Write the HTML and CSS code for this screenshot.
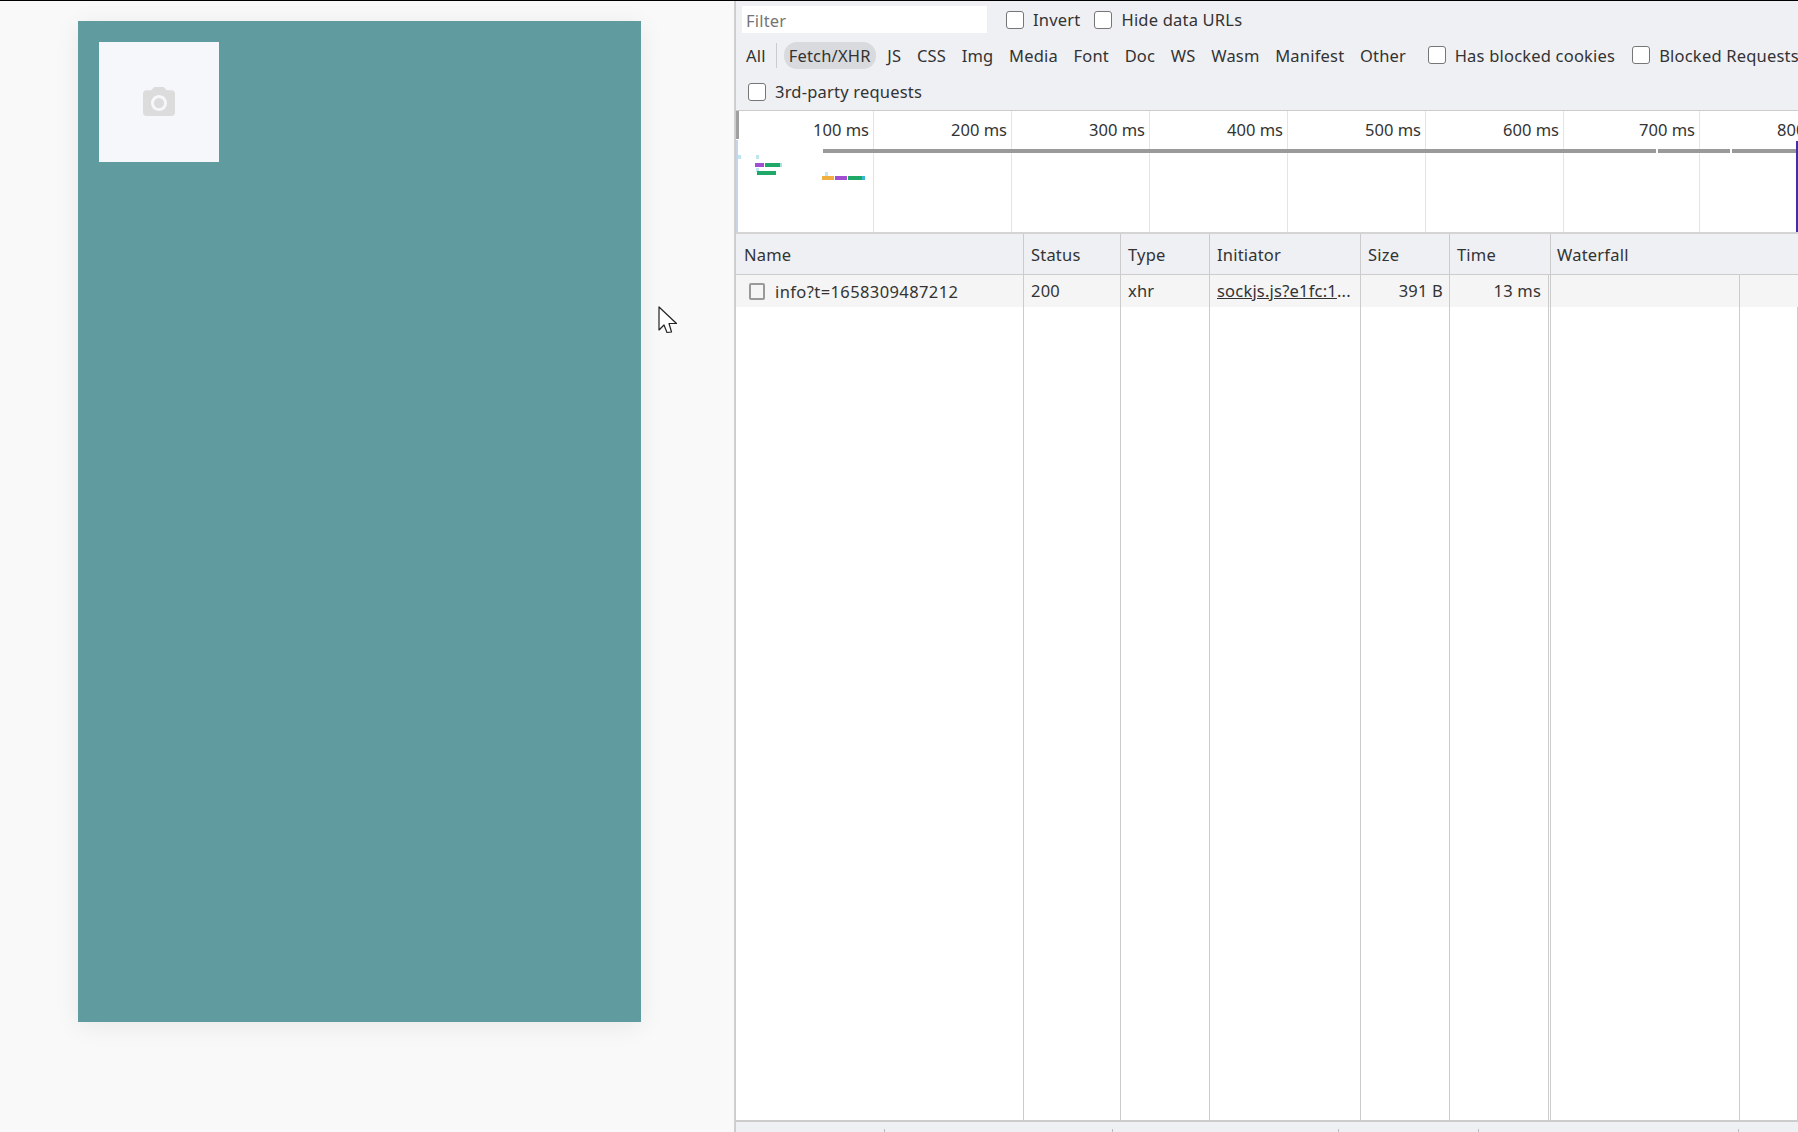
FILE: index.html
```html
<!DOCTYPE html>
<html lang="en">
<head>
    <meta charset="UTF-8">
    <meta name="viewport" content="width=device-width, initial-scale=1.0">
    <title>Network</title>
    <link rel="stylesheet" href="styles.css">
</head>
<body>
    <div class="main">
        <div class="page">
            <div class="phone">
                <div class="thumb">
                    <svg class="camera" viewBox="2 2 20 18" width="32" height="29"><path fill-rule="evenodd" d="M9 2L7.17 4H4c-1.1 0-2 .9-2 2v12c0 1.1.9 2 2 2h16c1.1 0 2-.9 2-2V6c0-1.1-.9-2-2-2h-3.17L15 2H9zm3 15c-2.76 0-5-2.24-5-5s2.24-5 5-5 5 2.24 5 5-2.24 5-5 5z"/><circle cx="12" cy="12" r="3.2"/></svg>
                </div>
            </div>
            <svg class="cursor" viewBox="0 0 20 29" width="20" height="29"><path d="M1 1v23l5-5 3 7.500 4.500-.5-2.500-8.500h7.500z" fill="#fff" stroke="#222" stroke-width="1.2" stroke-linejoin="round"/></svg>
        </div>
        <div class="devtools">
            <div class="toolbar">
                <div class="bar-row row-filter">
                    <div class="filter-input">Filter</div>
                    <label class="check check-invert"><input type="checkbox">Invert</label>
                    <label class="check check-hide"><input type="checkbox">Hide data URLs</label>
                </div>
                <div class="bar-row row-types">
                    <span class="type type-all">All</span>
                    <span class="type-sep"></span>
                    <span class="type type-active">Fetch/XHR</span>
                    <span class="type">JS</span>
                    <span class="type">CSS</span>
                    <span class="type">Img</span>
                    <span class="type">Media</span>
                    <span class="type">Font</span>
                    <span class="type">Doc</span>
                    <span class="type">WS</span>
                    <span class="type">Wasm</span>
                    <span class="type">Manifest</span>
                    <span class="type">Other</span>
                    <label class="check check-cookies"><input type="checkbox">Has blocked cookies</label>
                    <label class="check check-blocked"><input type="checkbox">Blocked Requests</label>
                </div>
                <div class="bar-row row-third">
                    <label class="check"><input type="checkbox">3rd-party requests</label>
                </div>
            </div>
            <div class="overview">
                <div class="tick">100 ms</div>
                <div class="tick">200 ms</div>
                <div class="tick">300 ms</div>
                <div class="tick">400 ms</div>
                <div class="tick">500 ms</div>
                <div class="tick">600 ms</div>
                <div class="tick tick-short">700 ms</div>
                <div class="tick">800 ms</div>
                <span class="ov thumb-grab"></span>
                <span class="ov start-line"></span>
                <span class="ov load-line"></span>
                <span class="ov track track-a"></span>
                <span class="ov track track-b"></span>
                <span class="ov track track-c"></span>
                <span class="ov mark mark-a"></span>
                <span class="ov mark mark-b"></span>
                <span class="ov mark mark-c"></span>
                <span class="ov mark mark-d"></span>
                <span class="ov seg seg-p1"></span>
                <span class="ov seg seg-g1"></span>
                <span class="ov seg seg-c1"></span>
                <span class="ov seg seg-g2"></span>
                <span class="ov seg seg-o3"></span>
                <span class="ov seg seg-p3"></span>
                <span class="ov seg seg-g3"></span>
                <span class="ov seg seg-c3"></span>
            </div>
            <div class="net-table">
                <div class="head head-name">Name</div>
                <div class="head">Status</div>
                <div class="head">Type</div>
                <div class="head">Initiator</div>
                <div class="head">Size</div>
                <div class="head">Time</div>
                <div class="head head-fall">Waterfall</div>

                <div class="cell cell-name"><span class="row-box"></span>info?t=1658309487212</div>
                <div class="cell">200</div>
                <div class="cell">xhr</div>
                <div class="cell"><span class="link">sockjs.js?e1fc:1</span>...</div>
                <div class="cell cell-num cell-size">391 B</div>
                <div class="cell cell-num cell-time">13 ms</div>
                <div class="cell"></div>
                <div class="cell cell-last"></div>

                <div class="fill"></div>
                <div class="fill"></div>
                <div class="fill"></div>
                <div class="fill"></div>
                <div class="fill"></div>
                <div class="fill fill-time"></div>
                <div class="fill"></div>
                <div class="fill cell-last"></div>
            </div>
            <div class="foot">
                <span></span><span></span><span></span><span></span><span></span>
            </div>
        </div>
    </div>
</body>
</html>
```

FILE: styles.css
```css
* {
    box-sizing: border-box;
}
html, body {
    height: 100%;
}
body {
    margin: 0;
    overflow: hidden;
    border-top: 1px solid #000;
    font-family: "Noto Sans", Arial, sans-serif;
    font-size: 16.5px;
    letter-spacing: 0.2px;
    color: #333;
    background-color: #fff;
}
.main {
    display: flex;
    height: 1131px;
}

/* left: page preview */
.page {
    position: relative;
    width: 735px;
    flex: none;
    padding: 20px 0 0 78px;
    background-color: #f9f9f9;
    border-right: 1px solid #d0d0d0;
}
.phone {
    width: 563px;
    height: 1001px;
    padding: 21px;
    background-color: #5f9b9f;
    box-shadow: 0 4px 24px rgba(0, 0, 0, 0.07);
}
.thumb {
    display: flex;
    justify-content: center;
    align-items: center;
    width: 120px;
    height: 120px;
    padding-bottom: 1px;
    background-color: #f5f7fb;
}
.camera {
    fill: #dcdcdc;
}
.cursor {
    position: absolute;
    left: 658px;
    top: 305px;
}

/* right: network panel */
.devtools {
    display: flex;
    flex-direction: column;
    flex: 1;
    min-width: 0;
    overflow: hidden;
    border-left: 1px solid #ccc;
}
.toolbar {
    height: 110px;
    flex: none;
    background-color: #eff0f4;
    border-bottom: 1px solid #ccc;
}
.bar-row {
    display: flex;
    align-items: center;
    white-space: nowrap;
}
.bar-row > * {
    flex: none;
}
.row-filter {
    height: 37px;
    padding-left: 6px;
}
.row-types {
    height: 34px;
    padding-left: 6px;
}
.row-third {
    height: 38px;
    padding-top: 1px;
    padding-left: 12px;
}
.filter-input {
    width: 245px;
    height: 27px;
    padding-left: 4px;
    line-height: 29px;
    color: #757575;
    background-color: #fff;
}
.check {
    display: flex;
    align-items: center;
}
.check input {
    appearance: none;
    flex: none;
    width: 18px;
    height: 18px;
    margin: 0 9px 0 0;
    background-color: #fff;
    border: 1.5px solid #767676;
    border-radius: 3px;
}
.check-invert {
    margin-left: 19px;
}
.check-hide {
    margin-left: 14px;
}
.check-cookies {
    margin-left: 10px;
}
.check-blocked {
    margin-left: 17px;
}
.type {
    padding: 2px 4px;
    margin-right: 7.6px;
    border-radius: 13px;
}
.type-all {
    margin-right: 6px;
}
.type-sep {
    width: 1px;
    height: 25px;
    margin-right: 7px;
    background-color: #ccc;
}
.type-active {
    padding: 2px 5px;
    background-color: #d9dadd;
}

/* timeline overview */
.overview {
    position: relative;
    display: flex;
    height: 121px;
    flex: none;
    letter-spacing: 0;
    background-color: #fff;
}
.tick {
    width: 138px;
    flex: none;
    padding: 7px 4px 0 0;
    text-align: right;
    border-right: 1px solid #e4e4e4;
}
.tick-short {
    width: 136px;
}
.ov {
    position: absolute;
}
.thumb-grab {
    left: 0;
    top: 0;
    width: 3px;
    height: 28px;
    background-color: #a0a0a0;
}
.start-line {
    left: 0;
    top: 29px;
    width: 2px;
    height: 92px;
    background-color: #c9d3e8;
}
.load-line {
    right: 0;
    top: 30px;
    width: 2px;
    height: 91px;
    background-color: #3f2fb0;
}
.track {
    top: 38px;
    height: 4px;
    background-color: #9a9a9a;
}
.track-a {
    left: 87px;
    width: 833px;
}
.track-b {
    left: 922px;
    width: 72px;
}
.track-c {
    left: 996px;
    right: 2px;
}
.mark {
    width: 3px;
    height: 4px;
    background-color: #bfe6f0;
}
.mark-a {
    left: 2px;
    top: 44px;
}
.mark-b {
    left: 20px;
    top: 44px;
}
.mark-c {
    left: 20px;
    top: 57px;
}
.mark-d {
    left: 89px;
    top: 61px;
}
.seg {
    height: 4px;
}
.seg-p1 {
    left: 19px;
    top: 52px;
    width: 9px;
    background-color: #a04fd0;
}
.seg-g1 {
    left: 29px;
    top: 52px;
    width: 15px;
    background-color: #1fa868;
}
.seg-c1 {
    left: 44px;
    top: 52px;
    width: 2px;
    background-color: #a8e0e8;
}
.seg-g2 {
    left: 21px;
    top: 60px;
    width: 19px;
    background-color: #1fa868;
}
.seg-o3 {
    left: 86px;
    top: 65px;
    width: 12px;
    background-color: #f0b040;
}
.seg-p3 {
    left: 99px;
    top: 65px;
    width: 12px;
    background-color: #a04fd0;
}
.seg-g3 {
    left: 112px;
    top: 65px;
    width: 14px;
    background-color: #1fa868;
}
.seg-c3 {
    left: 126px;
    top: 65px;
    width: 3px;
    background-color: #35b8d0;
}

/* request table */
.net-table {
    display: grid;
    flex: 1;
    min-height: 0;
    grid-template-columns: 288px 97px 89px 151px 89px 101px 189px 1fr;
    grid-template-rows: 41px 32px 1fr;
    border-top: 2px solid #d4d4d4;
}
.head {
    padding-left: 7px;
    line-height: 41px;
    background-color: #eff0f4;
    border-right: 1px solid #ccc;
    border-bottom: 1px solid #ccc;
}
.head-name {
    padding-left: 8px;
}
.head-fall {
    grid-column: 7 / 9;
    padding-left: 6px;
    border-right: none;
}
.cell {
    padding-left: 7px;
    line-height: 31px;
    white-space: nowrap;
    background-color: #f5f5f5;
    border-right: 1px solid #ccc;
}
.cell-name {
    display: flex;
    align-items: center;
    padding-left: 13px;
    letter-spacing: 0.4px;
}
.cell-num {
    padding: 0 7px 0 0;
    text-align: right;
}
.cell-size {
    padding-right: 6px;
}
.cell-time {
    border-right: 3px double #ccc;
}
.cell-last {
    border-right: none;
}
.row-box {
    width: 16px;
    height: 17px;
    margin-right: 10px;
    border: 2px solid #999;
    border-radius: 2px;
}
.link {
    text-decoration: underline;
}
.fill {
    background-color: #fff;
    border-right: 1px solid #ccc;
}
.fill-time {
    border-right: 3px double #ccc;
}
.foot {
    display: flex;
    align-items: flex-end;
    height: 12px;
    flex: none;
    background-color: #eff0f4;
    border-top: 2px solid #ccc;
}
.foot span {
    height: 3px;
    flex: none;
    border-right: 1px solid #bbb;
}
.foot span:nth-child(1) { width: 149px; }
.foot span:nth-child(2) { width: 228px; }
.foot span:nth-child(3) { width: 226px; }
.foot span:nth-child(4) { width: 140px; }
.foot span:nth-child(5) { width: 260px; }
```
